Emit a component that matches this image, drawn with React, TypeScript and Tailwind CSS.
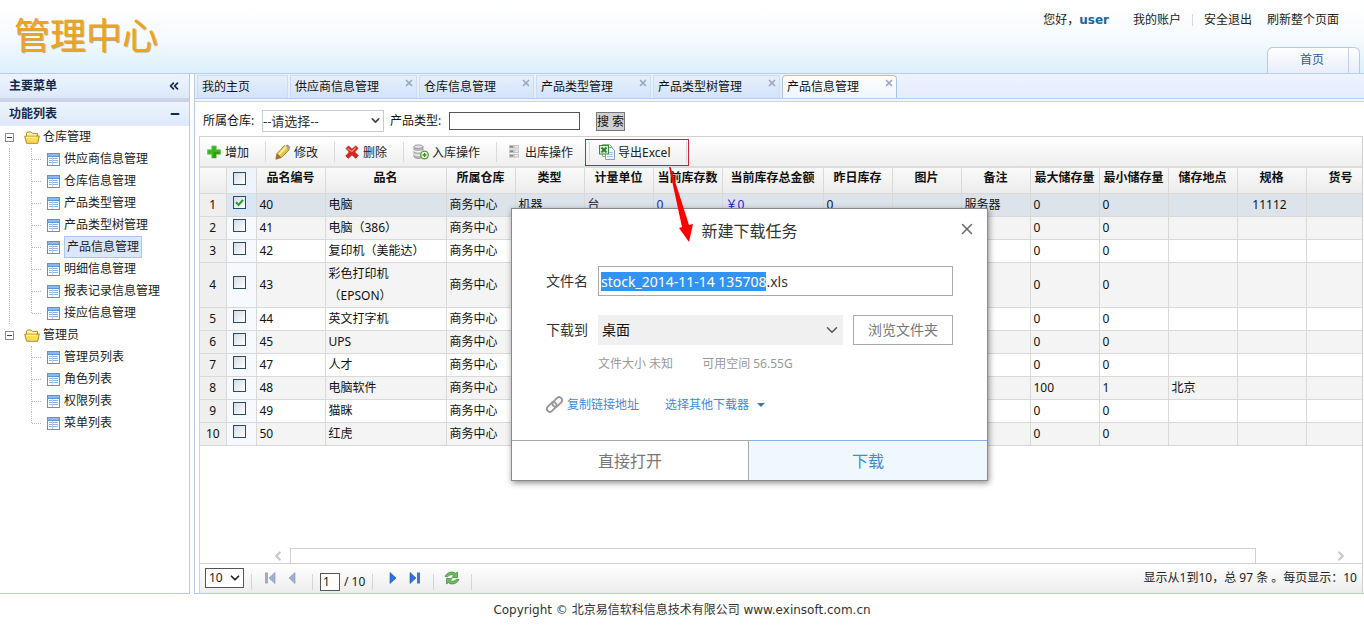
import { useEffect, useRef, useState } from "react";
import type { ReactNode } from "react";
import clsx from "clsx";
import { ChevronDown, ChevronLeft, ChevronRight, ChevronsLeft, Minus, X } from "lucide-react";

interface StockRow {
  id: string;
  name: string;
  type?: string;
  unit?: string;
  count?: string;
  total?: string;
  yesterday?: string;
  remark?: string;
  max: string;
  min: string;
  place?: string;
  spec?: string;
}

const MENU = [
  {
    title: "仓库管理",
    items: [
      "供应商信息管理",
      "仓库信息管理",
      "产品类型管理",
      "产品类型树管理",
      "产品信息管理",
      "明细信息管理",
      "报表记录信息管理",
      "接应信息管理",
    ],
  },
  { title: "管理员", items: ["管理员列表", "角色列表", "权限列表", "菜单列表"] },
];

const ACTIVE_PAGE = "产品信息管理";

const TABS = [
  { title: "我的主页", width: "w-[91px]" },
  { title: "供应商信息管理", width: "w-[127px]" },
  { title: "仓库信息管理", width: "w-[115px]" },
  { title: "产品类型管理", width: "w-[115px]" },
  { title: "产品类型树管理", width: "w-[127px]" },
  { title: ACTIVE_PAGE, width: "w-[115px]" },
];

const COLUMNS = [
  { title: "品名编号", width: "w-[69px]" },
  { title: "品名", width: "w-[121px]" },
  { title: "所属仓库", width: "w-[69px]" },
  { title: "类型", width: "w-[69px]" },
  { title: "计量单位", width: "w-[69px]" },
  { title: "当前库存数", width: "w-[69px]" },
  { title: "当前库存总金额", width: "w-[101px]" },
  { title: "昨日库存", width: "w-[69px]" },
  { title: "图片", width: "w-[69px]" },
  { title: "备注", width: "w-[69px]" },
  { title: "最大储存量", width: "w-[69px]" },
  { title: "最小储存量", width: "w-[69px]" },
  { title: "储存地点", width: "w-[69px]" },
  { title: "规格", width: "w-[69px]" },
  { title: "货号", width: "w-[69px]" },
];

const ROWS: StockRow[] = [
  { id: "40", name: "电脑", type: "机器", unit: "台", count: "0", total: "￥0", yesterday: "0", remark: "服务器", max: "0", min: "0", spec: "11112" },
  { id: "41", name: "电脑（386）", max: "0", min: "0" },
  { id: "42", name: "复印机（美能达）", max: "0", min: "0" },
  { id: "43", name: "彩色打印机（EPSON）", max: "0", min: "0" },
  { id: "44", name: "英文打字机", max: "0", min: "0" },
  { id: "45", name: "UPS", max: "0", min: "0" },
  { id: "47", name: "人才", max: "0", min: "0" },
  { id: "48", name: "电脑软件", max: "100", min: "1", place: "北京" },
  { id: "49", name: "猫眯", max: "0", min: "0" },
  { id: "50", name: "红虎", max: "0", min: "0" },
];

/* ---------- icons ---------- */

function TableIcon() {
  return (
    <svg className="h-[13px] w-[13px] shrink-0" viewBox="0 0 13 13" shapeRendering="crispEdges">
      <rect width="13" height="13" fill="#5f93cf" />
      <rect x="1" y="1" width="11" height="2" fill="#8fb8e8" />
      <rect x="1" y="4" width="11" height="8" fill="#fff" />
      <path d="M2 5.5h3M6 5.5h5M2 7.5h3M6 7.5h5M2 9.5h3M6 9.5h5" stroke="#8db4e2" />
      <path d="M5.5 4v8" stroke="#b9d2ef" />
    </svg>
  );
}

function FolderIcon() {
  return (
    <svg className="h-[13px] w-4 shrink-0" viewBox="0 0 16 13">
      <path d="M2.5 11.5V2.2L3.6 1h3.6l1.2 1.4h5.1v3" fill="#fff3a8" stroke="#b58a1c" />
      <path d="M.7 5.2h10.6l1.7-.3h2.3l-1.6 7.4H2.6z" fill="#f8dd55" stroke="#b58a1c" strokeLinejoin="round" />
      <path d="M2 6.2h10" stroke="#fff6bd" />
    </svg>
  );
}

function PlusIcon() {
  return (
    <svg className="h-4 w-4" viewBox="0 0 16 16">
      <path d="M5.8 2h4.4v3.8h4.3v4.4h-4.3V14H5.8v-3.8H1.5V5.8h4.3z" fill="#3db31e" stroke="#6cc653" strokeWidth=".8" />
      <path d="M8 8h6v2h-4v4H6.5z" fill="#23860f" opacity=".5" />
    </svg>
  );
}

function PencilIcon() {
  return (
    <svg className="h-4 w-4" viewBox="0 0 16 16">
      <path d="M.8 15.200L2 9.500 9.500 1.500l4.800 4.200L6.500 13.500z" fill="#e6c545" stroke="#94752a" strokeWidth=".8" />
      <path d="M4 10.500l7.300-7.700" stroke="#fbeea0" strokeWidth="2" />
      <path d="M10.300 1.500L12.500.5 15.500 3l-1.300 2.500z" fill="#9c9c9c" />
      <path d="M.8 15.200L2 9.500l4.500 4z" fill="#a8643a" />
    </svg>
  );
}

function DeleteIcon() {
  return (
    <svg className="h-4 w-4" viewBox="0 0 16 16">
      <path d="M2 4.500L4.500 2 8 5.300 11.700 2 14 4.300 10.600 8l3.600 3.600-2.500 2.600L8 10.700l-3.700 3.500L1.800 12 5.400 8z" fill="#e1221c" stroke="#a81410" strokeWidth=".8" />
      <path d="M3.500 4.500L8 7.500l3.800-3.800" fill="none" stroke="#ff8c80" strokeWidth="1.200" />
    </svg>
  );
}

function StockInIcon() {
  return (
    <svg className="h-4 w-4" viewBox="0 0 16 16">
      <path d="M1 2.500v10c0 2.500 9 2.500 9 0v-10z" fill="#b9b9b9" stroke="#8a8a8a" strokeWidth=".8" />
      <path d="M1 6c0 2.300 9 2.300 9 0M1 9.500c0 2.300 9 2.300 9 0" fill="none" stroke="#f2f2f2" strokeWidth="1.300" />
      <ellipse cx="5.500" cy="2.700" rx="4.500" ry="1.800" fill="#e2e2e2" stroke="#8a8a8a" strokeWidth=".8" />
      <circle cx="11.500" cy="11" r="3.800" fill="#eef7e8" stroke="#5b9c3e" strokeWidth="1.300" />
      <path d="M11.500 9v4M9.500 11h4" stroke="#3f8a22" strokeWidth="1.300" />
    </svg>
  );
}

function StockOutIcon() {
  return (
    <svg className="h-4 w-4" viewBox="0 0 16 16">
      <rect x="3" y="1" width="10" height="3.600" fill="#c4c4c4" />
      <rect x="3" y="5.500" width="10" height="3.600" fill="#c4c4c4" />
      <rect x="3" y="10" width="10" height="3.600" fill="#c4c4c4" />
      <path d="M4 2.800h3M4 7.300h3M4 11.800h3" stroke="#858585" strokeWidth="1.400" />
      <path d="M9 2.800h3M9 7.300h3M9 11.800h3" stroke="#eee" strokeWidth="1.400" />
    </svg>
  );
}

function ExcelIcon() {
  return (
    <svg className="h-4 w-4" viewBox="0 0 16 16">
      <path d="M3.500.5h7l3 3v9h-10z" fill="#fff" stroke="#8fb08f" />
      <path d="M6.500 3.500h6l3 3v9h-9z" fill="#f3f8ff" stroke="#7f9fd0" />
      <path d="M10 8.500h4M10 10.500h4M8 12.500h6" stroke="#a3bfe6" />
      <rect x=".5" y="1.500" width="9" height="8.500" fill="#dcefd8" stroke="#3e8a3a" />
      <path d="M2.500 3.500l5 4.800M7.500 3.500l-5 4.800" stroke="#237a20" strokeWidth="1.800" />
    </svg>
  );
}

function ChainIcon() {
  return (
    <svg className="mr-1 h-[17px] w-[17px]" viewBox="0 0 17 17" fill="none" stroke="#999" strokeWidth="2">
      <rect x="5.800" y="3" width="11" height="6" rx="3" transform="rotate(-45 11.300 6)" />
      <rect x=".2" y="8" width="11" height="6" rx="3" transform="rotate(-45 5.700 11)" />
    </svg>
  );
}

function PageIcon({ kind }: { kind: "first" | "prev" | "next" | "last" }) {
  const back = kind === "first" || kind === "prev";
  const bar = kind === "first" || kind === "last";
  return (
    <svg className={clsx("h-3", bar ? "w-3" : "w-2", back && "-scale-x-100")} viewBox={bar ? "0 0 12 12" : "0 0 8 12"}>
      <path d="M1 .5L7 6l-6 5.500z" fill={back ? "#9fb1cc" : "#2f74dc"} stroke={back ? "#8094b5" : "#1c4fae"} strokeWidth=".6" />
      {bar && <rect x="8" y=".5" width="3" height="11" fill={back ? "#a9a5c4" : "#3a78d8"} />}
    </svg>
  );
}

function RefreshIcon() {
  return (
    <svg className="h-4 w-4" viewBox="0 0 16 16">
      <path d="M1 6.500C3 2 8.500.8 11.500 3.300L13.500 2v5.500H8l1.800-2C7.500 4 4.500 5 3.500 7z" fill="#6dbb5f" stroke="#3d8b35" strokeWidth=".7" />
      <path d="M15 9.500c-2 4.500-7.500 5.700-10.500 3.200L2.500 14V8.500H8l-1.800 2C8.500 12 11.500 11 12.500 9z" fill="#6dbb5f" stroke="#3d8b35" strokeWidth=".7" />
    </svg>
  );
}

/* ---------- pieces ---------- */

function Header() {
  return (
    <header className="flex h-[74px] shrink-0 justify-between border-b border-[#b4cfe8] bg-linear-to-b from-white via-[#f7fbfe] to-[#dceffc]">
      <h1 className="pt-2.5 pl-[14px] text-[36px] leading-[52px] font-normal text-[#eba51d] [text-shadow:1px_1px_1px_#b5a37a]">
        管理中心
      </h1>
      <div className="flex flex-col items-end justify-between pr-1">
        <nav className="flex items-center pt-[11px] pr-[21px] leading-[18px] text-[#222]">
          <span>您好，</span>
          <b className="mr-6 font-['DejaVu_Sans'] text-[#1b6694]">user</b>
          <a href="#account">我的账户</a>
          <i className="mx-[11px] h-3 w-px bg-[#d0d9e2]" />
          <a href="#logout" className="mr-[15px]">
            安全退出
          </a>
          <a href="#reload">刷新整个页面</a>
        </nav>
        <a
          href="#home"
          className="flex h-[26px] w-[93px] rounded-t-md border border-b-0 border-[#b7c9e4] bg-linear-to-b from-white to-[#e9edfa] text-[#1c6299]"
        >
          <span className="flex-1 pl-2 text-center leading-6">首页</span>
          <i className="w-[11px] border-l border-[#c3cfe6]" />
        </a>
      </div>
    </header>
  );
}

function PanelTitle({ children, icon }: { children: ReactNode; icon: ReactNode }) {
  return (
    <div className="flex h-6 items-center justify-between bg-linear-to-b from-[#eef4fe] to-[#dce9fb] pr-2 pl-[9px] font-bold text-[#14284f]">
      {children}
      <button className="text-[#14284f]">{icon}</button>
    </div>
  );
}

function Sidebar() {
  return (
    <aside className="w-[190px] shrink-0 border-r border-b border-[#b9c9e8] bg-white">
      <PanelTitle icon={<ChevronsLeft size={14} strokeWidth={3} />}>主要菜单</PanelTitle>
      <div className="h-1 bg-[#ccd5e8]" />
      <PanelTitle icon={<Minus size={12} strokeWidth={4} />}>功能列表</PanelTitle>
      <ul className="text-[#222]">
        {MENU.map((group, index) => (
          <li key={group.title}>
            <div className="flex h-[22px] items-center">
              <button className="mr-[10px] ml-[5px] flex h-[9px] w-[9px] items-center justify-center border border-[#8c8c8c]">
                <i className="h-px w-[5px] bg-[#444]" />
              </button>
              <FolderIcon />
              <span className="ml-[3px]">{group.title}</span>
            </div>
            <ul className={clsx("ml-[9px] border-l border-dotted", index === 0 ? "border-[#bbb]" : "border-transparent")}>
              {group.items.map((item, i) => (
                <li key={item} className="flex h-[22px] items-center pl-[21px]">
                  <i
                    className={clsx(
                      "border-l border-dotted border-[#bbb]",
                      i === group.items.length - 1 ? "h-[11px] self-start" : "h-full"
                    )}
                  />
                  <i className="mr-1.5 w-[9px] border-t border-dotted border-[#bbb]" />
                  <TableIcon />
                  <a
                    href="#page"
                    className={clsx(
                      "ml-1 leading-5",
                      item === ACTIVE_PAGE && "border border-[#aec6ec] bg-[#dae6fa] px-0.5"
                    )}
                  >
                    {item}
                  </a>
                </li>
              ))}
            </ul>
          </li>
        ))}
      </ul>
    </aside>
  );
}

function TabBar() {
  return (
    <div className="border-b border-[#c3d5ee] bg-[#f0f6fe] pb-0.5">
      <div className="flex h-[25px] items-end gap-0.5 border-b border-[#b9cdea] bg-linear-to-b from-[#eef3fe] to-[#e4ebfb] pl-0.5">
        {TABS.map(({ title, width }) => {
          const active = title === ACTIVE_PAGE;
          return (
            <div
              key={title}
              className={clsx(
                "flex h-[23px] justify-between border border-b-0 pr-0.5 pl-1",
                width,
                active
                  ? "rounded-t border-[#a9c1e4] bg-linear-to-b from-white to-[#eef4fe]"
                  : "border-[#cbdcf5] bg-linear-to-b from-[#e6effd] to-[#d3e3fb]"
              )}
            >
              <a href="#tab" className="leading-[22px] text-[#111]">
                {title}
              </a>
              {title !== "我的主页" && (
                <button aria-label="关闭" className="mt-0.5 h-[10px] text-[#9aa8bd]">
                  <X size={10} strokeWidth={4} />
                </button>
              )}
            </div>
          );
        })}
      </div>
    </div>
  );
}

function SearchForm() {
  return (
    <form className="flex h-[34px] items-center pt-1 pl-2 text-[#111]" onSubmit={(e) => e.preventDefault()}>
      <label htmlFor="warehouse" className="w-[59px]">
        所属仓库:
      </label>
      <span className="relative flex">
        <select id="warehouse" className="h-[22px] w-[122px] appearance-none border border-[#c5ccd4] bg-white text-[13px] leading-5 text-[#333]">
          <option>--请选择--</option>
        </select>
        <ChevronDown size={13} strokeWidth={3} className="pointer-events-none absolute top-1 right-0.5 text-[#444]" />
      </span>
      <label htmlFor="kind" className="ml-1.5 w-[59px]">
        产品类型:
      </label>
      <input id="kind" className="h-[18px] w-[131px] border border-[#555] bg-white px-1" />
      <button className="ml-4 h-[19px] w-[29px] border border-[#777] bg-[#d0d0d0] leading-[17px] whitespace-nowrap">搜 索</button>
    </form>
  );
}

function ToolButton({ icon, children }: { icon: ReactNode; children: ReactNode }) {
  return (
    <button className="flex h-5 items-center gap-[3px] border-r border-[#dadada] pr-4 pl-[9px] first:pl-1.5 last:border-r-0">
      {icon}
      <span className="pt-0.5">{children}</span>
    </button>
  );
}

function Toolbar() {
  return (
    <div className="relative flex h-[31px] items-center border-b-2 border-[#dcdcdc] bg-linear-to-b from-white to-[#efefef] text-[#222]">
      <ToolButton icon={<PlusIcon />}>增加</ToolButton>
      <ToolButton icon={<PencilIcon />}>修改</ToolButton>
      <ToolButton icon={<DeleteIcon />}>删除</ToolButton>
      <ToolButton icon={<StockInIcon />}>入库操作</ToolButton>
      <ToolButton icon={<StockOutIcon />}>出库操作</ToolButton>
      <ToolButton icon={<ExcelIcon />}>导出Excel</ToolButton>
      <i className="pointer-events-none absolute top-0.5 left-[385px] h-[27px] w-[104px] border border-[#cf2331]" />
    </div>
  );
}

function Checkbox({ label, defaultChecked }: { label: string; defaultChecked?: boolean }) {
  const [checked, setChecked] = useState(!!defaultChecked);
  return (
    <span className="relative mx-auto block h-[13px] w-[13px]">
      <input
        type="checkbox"
        aria-label={label}
        checked={checked}
        onChange={(e) => setChecked(e.target.checked)}
        className="block h-[13px] w-[13px] appearance-none border border-[#2b4a6b] bg-linear-to-br from-[#d3dce6] to-white"
      />
      {checked && (
        <svg className="pointer-events-none absolute top-0 left-0 h-[13px] w-[13px]" viewBox="0 0 13 13">
          <path d="M3 6.200l2.500 2.800L10 3.800" fill="none" stroke="#22a022" strokeWidth="2" />
        </svg>
      )}
    </span>
  );
}

function StockTable() {
  return (
    <div className="flex-1 overflow-hidden bg-white">
      <table className="w-[1175px] table-fixed border-collapse text-[#111]">
        <thead>
          <tr className="h-[25px] bg-linear-to-b from-[#fafafa] to-[#ececec] align-top">
            <th className="w-[26px] border-r border-b border-[#d9d9d9]" />
            <th className="w-[30px] border-r border-b border-[#d9d9d9] bg-[#eef4fb] pt-1 pr-1">
              <Checkbox label="全选" />
            </th>
            {COLUMNS.map(({ title, width }) => (
              <th key={title} className={clsx("border-r border-b border-[#d9d9d9] leading-5 font-bold whitespace-nowrap", width)}>
                {title}
              </th>
            ))}
          </tr>
        </thead>
        <tbody>
          {ROWS.map((row, i) => (
            <tr
              key={row.id}
              className={clsx(
                "h-[23px] [&>td]:border-r [&>td]:border-b [&>td]:border-[#d9d9d9] [&>td]:leading-[22px]",
                i === 0 ? "bg-[#dce3eb]" : i % 2 ? "bg-[#f4f4f4]" : "bg-white"
              )}
            >
              <td className="bg-[#efefef] text-center">{i + 1}</td>
              <td className={clsx("pr-1 pb-1", i === 0 ? "bg-[#d9e6f3]" : "bg-[#f6fafe]")}>
                <Checkbox label={row.name} defaultChecked={i === 0} />
              </td>
              <td className="pl-[3px]">{row.id}</td>
              <td className="pl-[3px]">{row.name}</td>
              <td className="pl-[3px]">商务中心</td>
              <td className="pl-[3px]">{row.type}</td>
              <td className="pl-[3px]">{row.unit}</td>
              <td className="pl-[3px] text-[#1a1ae0]">{row.count}</td>
              <td className="pl-[3px] text-[#1a1ae0]">{row.total}</td>
              <td className="pl-[3px]">{row.yesterday}</td>
              <td />
              <td className="pl-[3px]">{row.remark}</td>
              <td className="pl-[3px]">{row.max}</td>
              <td className="pl-[3px]">{row.min}</td>
              <td className="pl-[3px]">{row.place}</td>
              <td className="pr-1 text-center">{row.spec}</td>
              <td />
            </tr>
          ))}
        </tbody>
      </table>
    </div>
  );
}

function ScrollBar() {
  return (
    <div className="flex h-[15px] items-end text-[#c8c8c8]">
      <ChevronLeft size={14} strokeWidth={4} className="ml-[71px]" />
      <i className="ml-[5px] h-[15px] flex-1 border border-b-0 border-[#d0d0d0]" />
      <ChevronRight size={14} strokeWidth={4} className="mr-[14px] ml-[78px]" />
    </div>
  );
}

function Pager() {
  return (
    <div className="flex h-[30px] items-center border-t border-[#d0d0d0] bg-linear-to-b from-white to-[#ededed] pb-0.5 pl-[5px] text-[#222]">
      <span className="relative flex">
        <select aria-label="每页显示" className="h-5 w-[39px] appearance-none border border-[#555] bg-white pl-[3px] leading-4">
          <option>10</option>
        </select>
        <ChevronDown size={14} strokeWidth={3} className="pointer-events-none absolute top-[3px] right-0.5" />
      </span>
      <i className="mt-2 ml-[7px] h-4 w-px bg-[#d5d5d5]" />
      <button aria-label="首页" className="ml-3">
        <PageIcon kind="first" />
      </button>
      <button aria-label="上一页" className="ml-3">
        <PageIcon kind="prev" />
      </button>
      <i className="mt-2 mr-[7px] ml-4 h-4 w-px bg-[#d5d5d5]" />
      <div className="flex items-center pt-2">
        <input aria-label="页码" defaultValue="1" className="mr-1 h-[18px] w-5 border border-[#555] bg-white pl-0.5" />/ 10
      </div>
      <i className="mt-2 mr-4 ml-[7px] h-4 w-px bg-[#d5d5d5]" />
      <button aria-label="下一页">
        <PageIcon kind="next" />
      </button>
      <button aria-label="末页" className="ml-3">
        <PageIcon kind="last" />
      </button>
      <i className="mt-2 mr-[10px] ml-3 h-4 w-px bg-[#d5d5d5]" />
      <button aria-label="刷新">
        <RefreshIcon />
      </button>
      <i className="mt-2 ml-[11px] h-4 w-px bg-[#d5d5d5]" />
      <span className="ml-auto pr-[5px]">显示从1到10，总 97 条 。每页显示：10</span>
    </div>
  );
}

function DownloadDialog() {
  const nameRef = useRef<HTMLInputElement>(null);

  // preselect the base name, leaving the extension alone
  useEffect(() => {
    const el = nameRef.current;
    if (!el) return;
    el.focus();
    el.setSelectionRange(0, el.value.lastIndexOf("."));
  }, []);

  return (
    <div
      role="dialog"
      aria-labelledby="download-title"
      className="absolute top-[208px] left-[511px] w-[477px] border border-[#8a8a8a] bg-white text-[#333] shadow-[1px_2px_6px_rgba(0,0,0,0.45)]"
    >
      <div className="relative pt-[10px]">
        <h2 id="download-title" className="text-center text-base leading-6">
          新建下载任务
        </h2>
        <button aria-label="关闭" className="absolute top-[11px] right-[11px] text-[#666]">
          <X size={18} strokeWidth={2} />
        </button>
      </div>
      <div className="flex flex-col px-[34px] pt-[23px] text-sm">
        <div className="flex items-center">
          <label htmlFor="filename" className="w-[52px]">
            文件名
          </label>
          <input
            id="filename"
            ref={nameRef}
            defaultValue="stock_2014-11-14 135708.xls"
            className="h-[30px] flex-1 border border-[#aaa] pl-0.5 leading-5 outline-none selection:bg-[#3393f5] selection:text-white"
          />
        </div>
        <div className="mt-[19px] flex items-center">
          <label htmlFor="folder" className="w-[52px]">
            下载到
          </label>
          <span className="relative flex flex-1">
            <select id="folder" className="h-[30px] w-full appearance-none bg-[#f0f0f0] pl-1 text-[#111]">
              <option>桌面</option>
            </select>
            <ChevronDown size={18} strokeWidth={2} className="pointer-events-none absolute top-1.5 right-0.5 text-[#555]" />
          </span>
          <button className="ml-[10px] h-[30px] w-[100px] border border-[#aaa] text-[#777]">浏览文件夹</button>
        </div>
        <div className="mt-[10px] flex gap-[29px] pl-[52px] text-xs leading-[18px] text-[#999]">
          <span>文件大小 未知</span>
          <span>可用空间 56.55G</span>
        </div>
        <div className="mt-[23px] flex items-center text-xs text-[#3f8ad8]">
          <ChainIcon />
          <a href="#copy">复制链接地址</a>
          <button className="ml-[26px] flex items-center gap-2">
            选择其他下载器
            <i className="mt-px border-x-4 border-t-4 border-x-transparent border-t-[#3b79b5]" />
          </button>
        </div>
      </div>
      <div className="mt-[27px] flex h-10 text-base">
        <button className="w-[237px] border-t border-r border-[#aaa] text-[#777]">直接打开</button>
        <button className="flex-1 border-t border-[#80b2e4] bg-[#f0f8ff] text-[#3f8ad8]">下载</button>
      </div>
    </div>
  );
}

function Arrow() {
  return (
    <svg className="pointer-events-none absolute top-[165px] left-[665px] h-[80px] w-[32px]" viewBox="0 0 32 80">
      <path d="M4 2l1.500 0L24 60l4-1-4 18L14 63l3-1z" fill="#f00" />
    </svg>
  );
}

export default function App() {
  return (
    <div className="relative flex min-h-screen flex-col overflow-hidden bg-white font-['Noto_Sans','Noto_Sans_CJK_SC',sans-serif] text-xs">
      <Header />
      <div className="flex flex-1 gap-1">
        <Sidebar />
        <main className="flex min-w-0 flex-1 flex-col border-b border-l border-[#b9c9e8]">
          <TabBar />
          <SearchForm />
          <div className="mr-px ml-1 flex flex-1 flex-col border border-b-0 border-[#d0d0d0]">
            <Toolbar />
            <StockTable />
            <ScrollBar />
            <Pager />
          </div>
        </main>
      </div>
      <footer className="h-[33px] pt-2 text-center font-['DejaVu_Sans','Noto_Sans_CJK_SC',sans-serif] leading-4 text-[#333]">
        Copyright © 北京易信软科信息技术有限公司 www.exinsoft.com.cn
      </footer>
      <DownloadDialog />
      <Arrow />
    </div>
  );
}
